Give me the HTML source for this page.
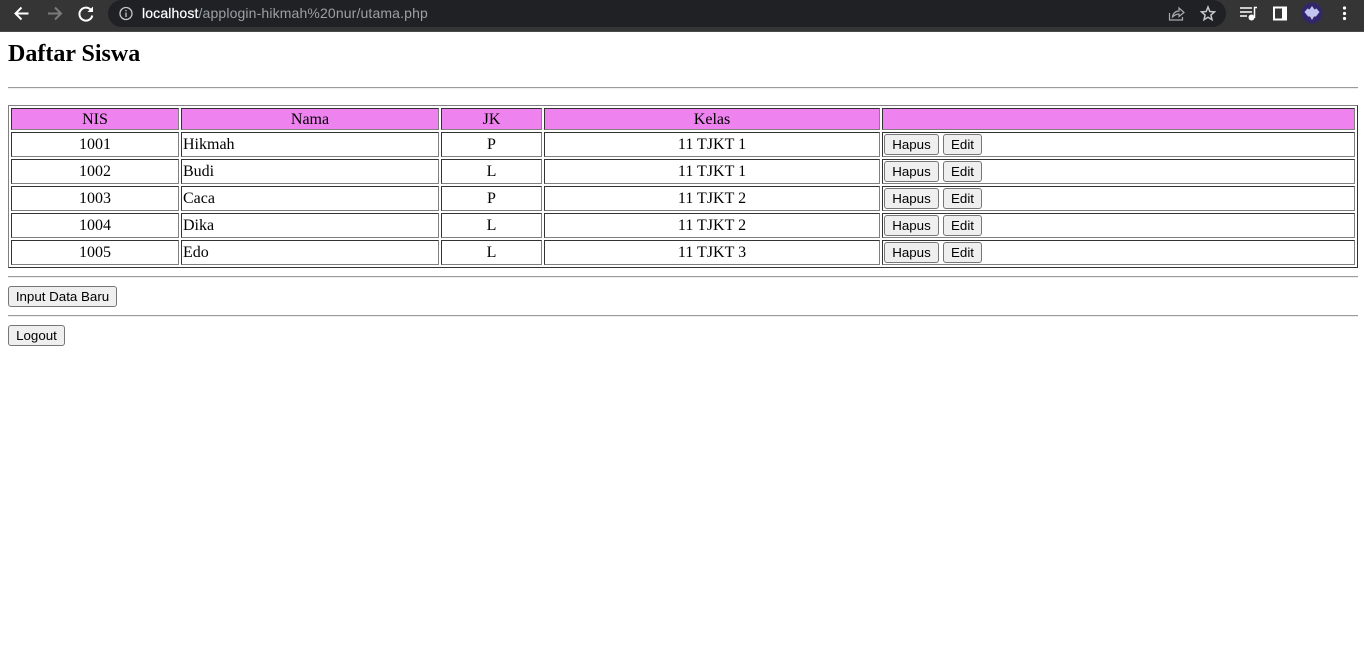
<!DOCTYPE html>
<html>
<head>
<meta charset="utf-8">
<title>Daftar Siswa</title>
<style>
html,body{margin:0;padding:0;width:1364px;height:667px;overflow:hidden;background:#fff;font-family:"Liberation Serif",serif;font-size:16px;color:#000}
#bar{position:absolute;left:0;top:0;width:1364px;height:32px;background:#353535}
#bar .edge{position:absolute;left:0;top:31px;width:1364px;height:1px;background:#4a4a4a}
#omni{position:absolute;left:108px;top:0;width:1118px;height:27px;background:#202124;border-radius:14px}
#url{position:absolute;left:142px;top:5px;font:14px/17px "Liberation Sans",sans-serif;letter-spacing:.14px;color:#9aa0a6;white-space:nowrap}
#url b{font-weight:normal;color:#fff;-webkit-text-stroke:.2px #fff}
#bar svg{position:absolute;left:0;top:0}
h1{position:absolute;left:8px;top:41px;margin:0;font-size:24px;line-height:27px;font-weight:bold}
.hr{position:absolute;left:8px;width:1350px;height:0;border-top:1px solid #9a9a9a;border-bottom:1px solid #eee}
table{position:absolute;left:8px;top:105px;width:1350px;table-layout:fixed;border-spacing:2px;border-collapse:separate;border:1px solid;border-color:#808080 #333 #333 #808080;box-sizing:border-box}
th,td{padding:0 1px;font-weight:normal;font-size:16px;line-height:18px;box-sizing:border-box;border:1px solid;border-color:#333 #808080 #808080 #333}
tr.h th{height:22px;background:#ee82ee;text-align:center;line-height:17px}
tr.r td{height:25px}
td.c{text-align:center}
button{font:13.33px/15px "Liberation Sans",sans-serif;color:#000;background:#efefef;border:1px solid #767676;border-radius:3px;padding:0;height:21px;margin:0;box-sizing:border-box;vertical-align:middle}
.b1{width:55px;margin-right:4px}
.b2{width:39px}
.abs{position:absolute;left:8px}
</style>
</head>
<body>
<div id="bar">
  <div id="omni"></div>
  <div class="edge"></div>
  <svg width="1364" height="32" viewBox="0 0 1364 32" fill="none">
    <path d="M28.500 13.500H16.500M21.500 7.500L15.500 13.500L21.500 19.500" stroke="#fff" stroke-width="2"/>
    <path d="M48 13.500H60M55 7.500L61 13.500L55 19.500" stroke="#7b7b7b" stroke-width="2"/>
    <path d="M91 10A6.500 6.500 0 1 0 92.300 15.500" stroke="#fff" stroke-width="2"/>
    <path d="M93 6.500V12H87.500Z" fill="#fff"/>
    <circle cx="126" cy="13.500" r="6" stroke="#c4c7c5" stroke-width="1.300"/>
    <path d="M126 12.500V17M126 10V11.200" stroke="#c4c7c5" stroke-width="1.300"/>
    <path d="M1169.500 13V20H1182.500V17" stroke="#aaa" stroke-width="1.200"/>
    <path d="M1172.500 17C1173 13 1176 11 1179 11V8L1184 12.500L1179 16.500V14C1176.500 14 1174.500 15 1172.500 17Z" stroke="#aaa" stroke-width="1.200"/>
    <path d="M1208 7L1209.800 11.500L1214.500 11.900L1210.900 15L1212 19.700L1208 17.200L1204 19.700L1205.100 15L1201.500 11.900L1206.200 11.500Z" stroke="#c8c8c8" stroke-width="1.500"/>
    <path d="M1240 8H1252M1240 12H1252M1240 16H1247" stroke="#fff" stroke-width="1.500"/>
    <path d="M1254.500 18V7.500H1257" stroke="#fff" stroke-width="1.500"/>
    <circle cx="1251.500" cy="17.500" r="3" fill="#fff"/>
    <path fill-rule="evenodd" d="M1273 6.500H1287V20.500H1273ZM1275 8.500V18.500H1282V8.500Z" fill="#fff"/>
    <circle cx="1312" cy="13" r="10.500" fill="#33276b"/>
    <path d="M1304.500 12L1307.500 8.500L1309.500 9.500L1312 6L1314.500 9.500L1316.500 8.500L1319.500 12L1316 16.500L1314 16.500L1312 20L1310 16.500L1308 16.500Z" fill="#c3c4f2"/>
    <circle cx="1344.500" cy="8" r="1.600" fill="#fff"/>
    <circle cx="1344.500" cy="13.500" r="1.600" fill="#fff"/>
    <circle cx="1344.500" cy="18.500" r="1.600" fill="#fff"/>
  </svg>
  <div id="url"><b>localhost</b>/applogin-hikmah%20nur/utama.php</div>
</div>

<h1>Daftar Siswa</h1>
<div class="hr" style="top:87px"></div>

<table>
  <colgroup>
    <col style="width:168px"><col style="width:258px"><col style="width:101px"><col style="width:336px"><col>
  </colgroup>
  <tr class="h"><th>NIS</th><th>Nama</th><th>JK</th><th>Kelas</th><th></th></tr>
  <tr class="r"><td class="c">1001</td><td>Hikmah</td><td class="c">P</td><td class="c">11 TJKT 1</td><td><button class="b1">Hapus</button><button class="b2">Edit</button></td></tr>
  <tr class="r"><td class="c">1002</td><td>Budi</td><td class="c">L</td><td class="c">11 TJKT 1</td><td><button class="b1">Hapus</button><button class="b2">Edit</button></td></tr>
  <tr class="r"><td class="c">1003</td><td>Caca</td><td class="c">P</td><td class="c">11 TJKT 2</td><td><button class="b1">Hapus</button><button class="b2">Edit</button></td></tr>
  <tr class="r"><td class="c">1004</td><td>Dika</td><td class="c">L</td><td class="c">11 TJKT 2</td><td><button class="b1">Hapus</button><button class="b2">Edit</button></td></tr>
  <tr class="r"><td class="c">1005</td><td>Edo</td><td class="c">L</td><td class="c">11 TJKT 3</td><td><button class="b1">Hapus</button><button class="b2">Edit</button></td></tr>
</table>

<div class="hr" style="top:276px"></div>
<button class="abs" style="top:286px;width:109px">Input Data Baru</button>
<div class="hr" style="top:315px"></div>
<button class="abs" style="top:325px;width:57px">Logout</button>
</body>
</html>
